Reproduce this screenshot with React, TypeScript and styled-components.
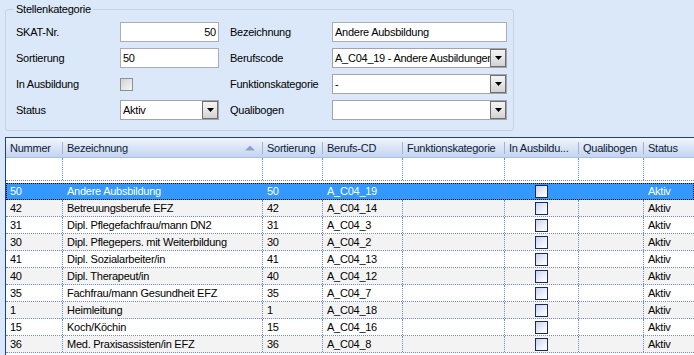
import styled, { createGlobalStyle } from 'styled-components'

const GlobalStyle = createGlobalStyle`
  html, body {
    margin: 0;
    padding: 0;
  }
  body {
    background: #dbe8f9;
    font-family: "Liberation Sans", Arial, sans-serif;
    font-size: 11px;
    letter-spacing: -0.25px;
    color: #000;
  }
`

const Page = styled.div`
  width: 694px;
  height: 355px;
  overflow: hidden;
  display: flex;
  flex-direction: column;
`

const TopPanel = styled.div`
  height: 137px;
  flex: none;
  padding: 3px 0 0 5px;
  box-sizing: border-box;
`

const GroupBox = styled.fieldset`
  margin: 0;
  width: 509px;
  height: 128px;
  box-sizing: border-box;
  border: 1px solid #c7d3e3;
  border-radius: 3px;
  padding: 0 0 0 10px;
`

const Legend = styled.legend`
  margin-left: -2px;
  padding: 0 2px;
  line-height: 13px;
`

const FormGrid = styled.div`
  display: grid;
  grid-template-columns: 104px 110px 102px 175px;
  grid-auto-rows: 20px;
  row-gap: 6px;
  margin-top: 6px;
  align-items: center;
`

const Label = styled.span`
  white-space: nowrap;
`

const TextBox = styled.div<{ $width: number; $right?: boolean }>`
  width: ${(p) => p.$width}px;
  height: 20px;
  box-sizing: border-box;
  border: 1px solid #abadb3;
  background: #fff;
  padding: 0 2px;
  line-height: 18px;
  text-align: ${(p) => (p.$right ? 'right' : 'left')};
`

const CheckBox = styled.div`
  width: 13px;
  height: 13px;
  box-sizing: border-box;
  border: 1px solid #8e8f8f;
  background: linear-gradient(135deg, #d2d2d2, #f7f7f7);
`

const Combo = styled.div<{ $width: number }>`
  width: ${(p) => p.$width}px;
  height: 20px;
  box-sizing: border-box;
  border: 1px solid #a4a4a4;
  background: #fff;
  display: flex;
  align-items: stretch;
`

const ComboText = styled.div`
  flex: 1;
  overflow: hidden;
  white-space: nowrap;
  padding: 0 2px;
  line-height: 18px;
`

const DropButton = styled.div`
  width: 16px;
  flex: none;
  box-sizing: border-box;
  border: 1px solid #6f6f6f;
  background: linear-gradient(#f4f4f4, #e6e6e6 50%, #d2d2d2);
  display: flex;
  align-items: center;
  justify-content: center;
`

const GridPanel = styled.div`
  flex: 1;
  margin-left: 5px;
  border-top: 1px solid #1d3f8c;
  border-left: 1px solid #1d3f8c;
  background: #fff;
  overflow: hidden;
`

const COLS = '57px 200px 60px 80px 102px 74px 65px 60px'

const HeaderRow = styled.div`
  display: grid;
  grid-template-columns: ${COLS};
  height: 20px;
  background: linear-gradient(#f3f6fc, #dce6f7 45%, #c3d5f2);
  border-bottom: 1px solid #a9bfe4;
  box-sizing: border-box;
`

const HeaderCell = styled.div`
  position: relative;
  display: flex;
  align-items: center;
  justify-content: space-between;
  padding: 0 8px 0 4px;
  color: #0d1a36;
  white-space: nowrap;
  overflow: hidden;

  &::after {
    content: '';
    position: absolute;
    right: 0;
    top: 4px;
    bottom: 3px;
    width: 1px;
    background: #9fb2d4;
    box-shadow: 1px 0 0 #ffffff;
  }
`

const FilterRow = styled.div`
  display: grid;
  grid-template-columns: ${COLS};
  height: 23px;
  box-sizing: border-box;
  border-bottom: 1px dotted #6f8acb;
`

const RowList = styled.div`
  padding-top: 2px;
`

const DataRow = styled.div<{ $alt: boolean; $selected: boolean }>`
  display: grid;
  grid-template-columns: ${COLS};
  height: 17px;
  box-sizing: border-box;
  border-bottom: 1px dotted #6f8acb;
  background: ${(p) => (p.$selected ? '#3399ff' : p.$alt ? '#f3f3f3' : '#ffffff')};
  color: ${(p) => (p.$selected ? '#ffffff' : '#000000')};
  outline: ${(p) => (p.$selected ? '1px dotted #000' : 'none')};
  outline-offset: -1px;
`

const Cell = styled.div<{ $center?: boolean }>`
  border-right: 1px dotted #6f8acb;
  padding-left: ${(p) => (p.$center ? 0 : 4)}px;
  line-height: 16px;
  white-space: nowrap;
  overflow: hidden;
  display: flex;
  align-items: center;
  justify-content: ${(p) => (p.$center ? 'center' : 'flex-start')};
`

const GridCheck = styled.div`
  width: 13px;
  height: 13px;
  box-sizing: border-box;
  border: 1px solid #1b2a57;
  background: linear-gradient(135deg, #c9d3ec, #f4f6fc 70%, #ffffff);
`

const SortUp = () => (
  <svg width="10" height="6" viewBox="0 0 10 6">
    <path d="M0 5.5 L5 0.5 L10 5.5 Z" fill="#8ea3c9" />
  </svg>
)

const ComboBox = ({ width, value }: { width: number; value: string }) => (
  <Combo $width={width}>
    <ComboText>{value}</ComboText>
    <DropButton>
      <svg width="7" height="4" viewBox="0 0 7 4">
        <path d="M0 0 H7 L3.5 4 Z" fill="#000" />
      </svg>
    </DropButton>
  </Combo>
)

const headers = [
  'Nummer',
  'Bezeichnung',
  'Sortierung',
  'Berufs-CD',
  'Funktionskategorie',
  'In Ausbildu...',
  'Qualibogen',
  'Status',
]

const rows = [
  ['50', 'Andere Aubsbildung', '50', 'A_C04_19'],
  ['42', 'Betreuungsberufe EFZ', '42', 'A_C04_14'],
  ['31', 'Dipl. Pflegefachfrau/mann DN2', '31', 'A_C04_3'],
  ['30', 'Dipl. Pflegepers. mit Weiterbildung', '30', 'A_C04_2'],
  ['41', 'Dipl. Sozialarbeiter/in', '41', 'A_C04_13'],
  ['40', 'Dipl. Therapeut/in', '40', 'A_C04_12'],
  ['35', 'Fachfrau/mann Gesundheit EFZ', '35', 'A_C04_7'],
  ['1', 'Heimleitung', '1', 'A_C04_18'],
  ['15', 'Koch/Köchin', '15', 'A_C04_16'],
  ['36', 'Med. Praxisassisten/in EFZ', '36', 'A_C04_8'],
]

export default function App() {
  return (
    <Page>
      <GlobalStyle />
      <TopPanel>
        <GroupBox>
          <Legend>Stellenkategorie</Legend>
          <FormGrid>
            <Label>SKAT-Nr.</Label>
            <TextBox $width={99} $right>
              50
            </TextBox>
            <Label>Bezeichnung</Label>
            <TextBox $width={175}>Andere Aubsbildung</TextBox>

            <Label>Sortierung</Label>
            <TextBox $width={99}>50</TextBox>
            <Label>Berufscode</Label>
            <ComboBox width={175} value="A_C04_19 - Andere Ausbildungen" />

            <Label>In Ausbildung</Label>
            <CheckBox />
            <Label>Funktionskategorie</Label>
            <ComboBox width={175} value="-" />

            <Label>Status</Label>
            <ComboBox width={99} value="Aktiv" />
            <Label>Qualibogen</Label>
            <ComboBox width={175} value="" />
          </FormGrid>
        </GroupBox>
      </TopPanel>

      <GridPanel>
        <HeaderRow>
          {headers.map((h) => (
            <HeaderCell key={h}>
              <span>{h}</span>
              {h === 'Bezeichnung' && <SortUp />}
            </HeaderCell>
          ))}
        </HeaderRow>
        <FilterRow>
          {headers.map((h) => (
            <Cell key={h} />
          ))}
        </FilterRow>
        <RowList>
          {rows.map((r, i) => (
            <DataRow key={r[0]} $alt={i % 2 === 1} $selected={i === 0}>
              <Cell>{r[0]}</Cell>
              <Cell>{r[1]}</Cell>
              <Cell>{r[2]}</Cell>
              <Cell>{r[3]}</Cell>
              <Cell />
              <Cell $center>
                <GridCheck />
              </Cell>
              <Cell />
              <Cell>Aktiv</Cell>
            </DataRow>
          ))}
        </RowList>
      </GridPanel>
    </Page>
  )
}
